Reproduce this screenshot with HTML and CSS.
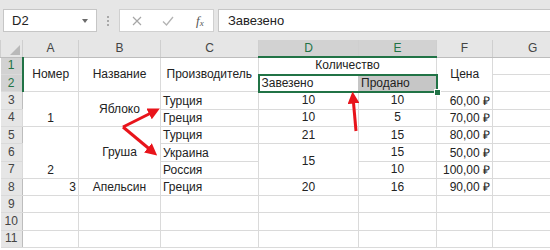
FILE: index.html
```html
<!DOCTYPE html>
<html lang="ru">
<head>
  <meta charset="UTF-8">
  <title>Книга1 - Excel</title>
  <link rel="stylesheet" href="styles.css">
</head>
<body>
  <div class="toolbar">
    <div class="namebox">
      <span>D2</span>
      <span class="caret"></span>
    </div>
    <div class="grip"><i></i><i></i><i></i></div>
    <div class="fbuttons">
      <svg class="fbtn" width="12" height="12" viewBox="0 0 12 12"><path d="M2 2 L10 10 M10 2 L2 10" stroke="#a6a6a6" stroke-width="1.2" fill="none"/></svg>
      <svg class="fbtn" width="14" height="12" viewBox="0 0 14 12"><path d="M2 6.5 L5.5 10 L12 2" stroke="#b3b3b3" stroke-width="1.3" fill="none"/></svg>
      <span class="fx">f<sub>x</sub></span>
    </div>
    <div class="formula">Завезено</div>
  </div>

  <table class="sheet">
    <colgroup>
      <col class="c-hdr"><col class="c-a"><col class="c-b"><col class="c-c"><col class="c-d"><col class="c-e"><col class="c-f"><col class="c-g">
    </colgroup>
    <tr class="head">
      <th class="corner"><span class="tri"></span></th>
      <th>A</th><th>B</th><th>C</th>
      <th class="picked">D</th><th class="picked">E</th>
      <th>F</th><th>G</th>
    </tr>
    <tr>
      <th class="rn picked">1</th>
      <td rowspan="2" class="mid">Номер</td>
      <td rowspan="2" class="mid">Название</td>
      <td rowspan="2" class="mid">Производитель</td>
      <td colspan="2" class="mid">Количество</td>
      <td rowspan="2" class="mid">Цена</td>
      <td></td>
    </tr>
    <tr>
      <th class="rn picked">2</th>
      <td class="left active">Завезено</td>
      <td class="left chosen">Продано<span class="handle"></span></td>
      <td></td>
    </tr>
    <tr>
      <th class="rn">3</th>
      <td rowspan="2" class="mid bottom">1</td>
      <td rowspan="2" class="mid">Яблоко</td>
      <td class="left">Турция</td>
      <td class="mid">10</td><td class="mid">10</td>
      <td class="num">60,00 ₽</td><td></td>
    </tr>
    <tr>
      <th class="rn">4</th>
      <td class="left">Греция</td>
      <td class="mid">10</td><td class="mid">5</td>
      <td class="num">70,00 ₽</td><td></td>
    </tr>
    <tr>
      <th class="rn">5</th>
      <td rowspan="3" class="mid bottom">2</td>
      <td rowspan="3" class="mid">Груша</td>
      <td class="left">Турция</td>
      <td class="mid">21</td><td class="mid">15</td>
      <td class="num">80,00 ₽</td><td></td>
    </tr>
    <tr>
      <th class="rn">6</th>
      <td class="left">Украина</td>
      <td rowspan="2" class="mid">15</td><td class="mid">15</td>
      <td class="num">50,00 ₽</td><td></td>
    </tr>
    <tr>
      <th class="rn">7</th>
      <td class="left">Россия</td>
      <td class="mid">10</td>
      <td class="num">100,00 ₽</td><td></td>
    </tr>
    <tr>
      <th class="rn">8</th>
      <td class="num">3</td>
      <td class="mid">Апельсин</td>
      <td class="left">Греция</td>
      <td class="mid">20</td><td class="mid">16</td>
      <td class="num">90,00 ₽</td><td></td>
    </tr>
    <tr><th class="rn">9</th><td></td><td></td><td></td><td></td><td></td><td></td><td></td></tr>
    <tr><th class="rn">10</th><td></td><td></td><td></td><td></td><td></td><td></td><td></td></tr>
    <tr><th class="rn">11</th><td></td><td></td><td></td><td></td><td></td><td></td><td></td></tr>
  </table>

  <!-- стрелки поверх таблицы -->
  <svg class="arrows" width="550" height="250" viewBox="0 0 550 250">
    <defs>
      <marker id="head" markerWidth="4" markerHeight="4" refX="2.2" refY="2" orient="auto" markerUnits="strokeWidth">
        <path d="M0 0 L4 2 L0 4 Z" fill="#e8141b"/>
      </marker>
    </defs>
    <path d="M123 127 L155 111" stroke="#e8141b" stroke-width="3" fill="none" marker-end="url(#head)"/>
    <path d="M123 127 L153 152" stroke="#e8141b" stroke-width="3" fill="none" marker-end="url(#head)"/>
    <path d="M356 131 L353 97" stroke="#e8141b" stroke-width="3" fill="none" marker-end="url(#head)"/>
  </svg>
</body>
</html>
```

FILE: styles.css
```css
body {
  margin: 0;
  width: 550px;
  height: 250px;
  overflow: hidden;
  background-color: #fff;
  font-family: "Liberation Sans", Arial, sans-serif;
  color: #222;
  position: relative;
}

.toolbar {
  height: 40px;
  background-color: #e6e6e6;
  display: flex;
  align-items: flex-start;
  padding-top: 9px;
  box-sizing: border-box;
}

.namebox {
  margin-left: 3px;
  width: 94px;
  height: 23px;
  box-sizing: border-box;
  background-color: #fff;
  border: 1px solid #c6c6c6;
  display: flex;
  align-items: center;
  justify-content: space-between;
  padding: 0 8px 0 8px;
  font-size: 13px;
  color: #222;
}

.caret {
  width: 0;
  height: 0;
  border-left: 3px solid transparent;
  border-right: 3px solid transparent;
  border-top: 4px solid #6b6b6b;
}

.grip {
  width: 22px;
  height: 23px;
  display: flex;
  flex-direction: column;
  align-items: center;
  justify-content: center;
  gap: 2px;
}

.grip i {
  width: 2px;
  height: 2px;
  background-color: #a8a8a8;
}

.fbuttons {
  width: 95px;
  height: 23px;
  box-sizing: border-box;
  background-color: #fff;
  border: 1px solid #d0d0d0;
  display: flex;
  align-items: center;
  padding-left: 11px;
  gap: 18px;
}

.fx {
  font-family: "Liberation Serif", serif;
  font-style: italic;
  font-size: 13px;
  color: #555;
  margin-left: 3px;
}

.fx sub {
  font-size: 9px;
  vertical-align: -1px;
}

.formula {
  flex: 1;
  margin-left: 4px;
  height: 23px;
  box-sizing: border-box;
  background-color: #fff;
  border: 1px solid #c6c6c6;
  border-right: none;
  font-size: 13px;
  line-height: 21px;
  padding-left: 9px;
}

.sheet {
  border-collapse: collapse;
  table-layout: fixed;
  width: 572px;
  font-size: 12px;
}

.c-hdr { width: 22px; }
.c-a { width: 56px; }
.c-b { width: 82px; }
.c-c { width: 98px; }
.c-d { width: 100px; }
.c-e { width: 78px; }
.c-f { width: 56px; }
.c-g { width: 80px; }

.sheet tr {
  height: 17.3px;
}

.sheet td {
  border: 1px solid #dadada;
  padding: 0 2px;
  white-space: nowrap;
  overflow: visible;
  vertical-align: bottom;
  line-height: 15px;
}

.sheet th {
  background-color: #e6e6e6;
  font-weight: normal;
  color: #444;
  padding: 0;
  font-size: 12px;
  line-height: 15px;
}

.head th {
  border-left: 1px solid #cfcfcf;
  border-bottom: 1px solid #bdbdbd;
}

.head th.picked {
  background-color: #d2d2d2;
  color: #217346;
  border-bottom: 2px solid #217346;
}

.corner {
  position: relative;
}

.tri {
  position: absolute;
  right: 2px;
  bottom: 2px;
  width: 0;
  height: 0;
  border-left: 10px solid transparent;
  border-bottom: 10px solid #b9b9b9;
}

.rn {
  border-right: 1px solid #bdbdbd;
  border-bottom: 1px solid #dadada;
}

.rn.picked {
  background-color: #d2d2d2;
  color: #217346;
  border-right: 2px solid #217346;
}

.mid {
  text-align: center;
  vertical-align: middle !important;
}

.mid.bottom {
  vertical-align: bottom !important;
}

.left {
  text-align: left;
}

.num {
  text-align: right;
}

.active {
  border: 2px solid #217346 !important;
  border-right: 1px solid #c6c6c6 !important;
}

.chosen {
  position: relative;
  background-color: #c6c6c6;
  border: 2px solid #217346 !important;
  border-left: 1px solid #c6c6c6 !important;
}

.handle {
  position: absolute;
  right: -5px;
  bottom: -5px;
  width: 5px;
  height: 5px;
  background-color: #217346;
  border: 1px solid #fff;
}

.arrows {
  position: absolute;
  left: 0;
  top: 0;
}
```
